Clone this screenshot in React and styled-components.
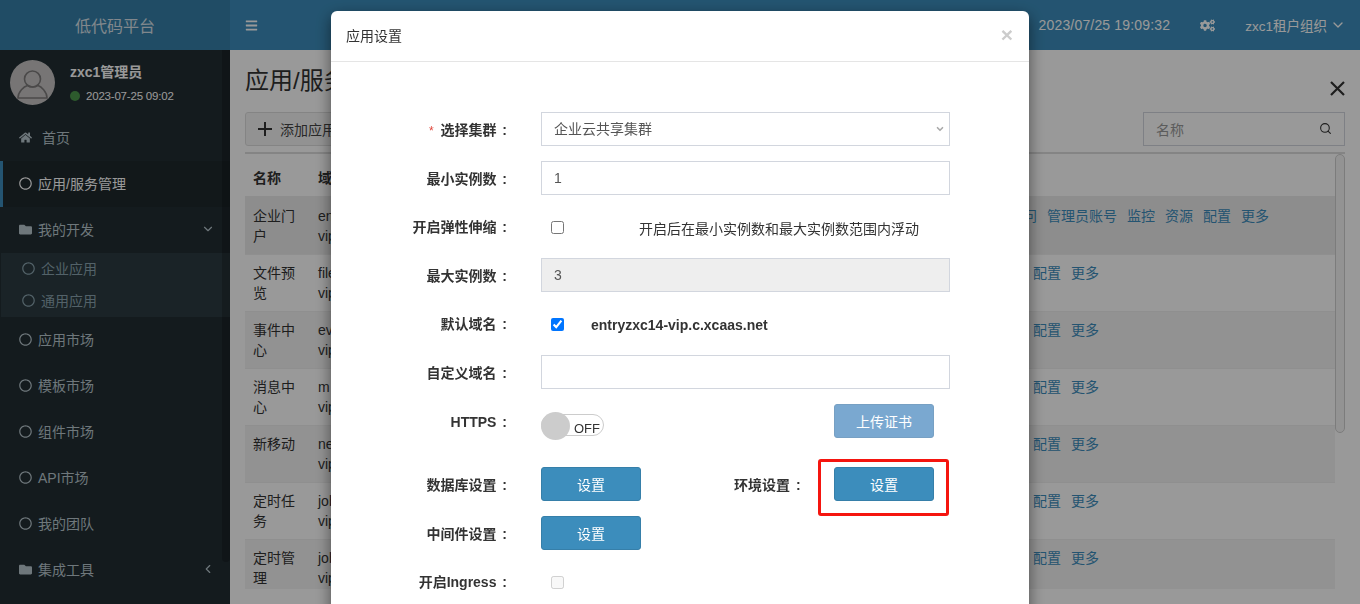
import React from "react";
import styled, { createGlobalStyle } from "styled-components";
import { FaBars, FaCogs, FaFolder, FaHome, FaRegCircle } from "react-icons/fa";
import { FiChevronDown, FiChevronLeft, FiSearch } from "react-icons/fi";

const GlobalStyle = createGlobalStyle`
  html, body {
    margin: 0;
    height: 100%;
    overflow: hidden;
    background: #fff;
    font-family: "Liberation Sans", "Noto Sans CJK SC", sans-serif;
    font-size: 14px;
    color: #333;
  }
  * { box-sizing: border-box; }
`;

const Page = styled.div`
  height: 100vh;
  display: flex;
  flex-direction: column;
  overflow: hidden;
`;
const Header = styled.header`
  height: 50px;
  flex: none;
  display: flex;
  align-items: center;
  background: #3c8dbc;
  color: #fff;
`;
const Logo = styled.div`
  width: 230px;
  height: 100%;
  background: #367fa9;
  display: flex;
  align-items: center;
  justify-content: center;
  font-size: 16px;
  color: #d8e2ea;
`;
const Burger = styled.span`
  margin-left: 15px;
  display: flex;
  font-size: 13px;
  color: #fff;
`;
const HeaderRight = styled.div`
  margin-left: auto;
  display: flex;
  align-items: center;
  padding-right: 14px;
`;
const Clock = styled.span`
  letter-spacing: 0.17px;
`;
const Cogs = styled.span`
  display: flex;
  margin-left: 30px;
  margin-right: 30px;
  font-size: 15px;
`;
const Tenant = styled.span`
  display: flex;
  align-items: center;
  gap: 3px;
  font-size: 13.5px;
  svg {
    font-size: 16px;
  }
`;
const Main = styled.div`
  flex: 1;
  min-height: 0;
  display: flex;
`;
const Sidebar = styled.aside`
  position: relative;
  width: 230px;
  flex: none;
  background: #222d32;
  overflow: hidden;
`;
const SlimBar = styled.div`
  position: absolute;
  top: 0;
  right: 0;
  width: 8px;
  height: 512px;
  border-radius: 0 0 7px 7px;
  background: rgba(0, 0, 0, 0.2);
`;
const UserPanel = styled.div`
  height: 65px;
  padding: 10px 0 0 10px;
  display: flex;
  gap: 15px;
`;
const Avatar = styled.svg`
  width: 45px;
  height: 45px;
  flex: none;
`;
const UserInfo = styled.div`
  color: #fff;
  display: flex;
  flex-direction: column;
`;
const UserName = styled.span`
  font-weight: 700;
  font-size: 14px;
  line-height: 20px;
  margin-top: 2px;
`;
const UserStatus = styled.span`
  display: flex;
  align-items: center;
  gap: 6px;
  font-size: 11.5px;
  letter-spacing: -0.2px;
  line-height: 16px;
  margin-top: 6px;
  color: #fff;
`;
const Dot = styled.i`
  width: 10px;
  height: 10px;
  border-radius: 50%;
  background: #4b964b;
`;
const MenuItem = styled.div`
  height: ${(p) => (p.$sub ? "32px" : "46px")};
  display: flex;
  align-items: center;
  gap: ${(p) => (p.$home ? "10px" : "6px")};
  padding-left: ${(p) => (p.$sub ? "21px" : p.$active ? "16px" : "19px")};
  padding-bottom: 2px;
  color: ${(p) => (p.$active ? "#fff" : p.$sub ? "#8aa4af" : "#b8c7ce")};
  background: ${(p) => (p.$active ? "#1e282c" : "transparent")};
  border-left: ${(p) => (p.$active ? "3px solid #3c8dbc" : "0")};
  font-size: 14px;
  svg {
    font-size: 13px;
    flex: none;
  }
`;
const Caret = styled.span`
  display: flex;
  margin-left: auto;
  margin-right: 15px;
  svg {
    font-size: 14px;
  }
`;
const SubMenu = styled.div`
  background: #2c3b41;
  margin-left: 1px;
`;
const Content = styled.main`
  flex: 1;
  min-width: 0;
  padding: 0 15px;
`;
const TitleRow = styled.div`
  height: 62px;
  display: flex;
  justify-content: space-between;
`;
const Title = styled.h1`
  margin: 14px 0 0;
  font-size: 24px;
  font-weight: 400;
  line-height: 34px;
`;
const CloseIcon = styled.svg`
  width: 15px;
  height: 15px;
  margin-top: 31px;
`;
const Toolbar = styled.div`
  height: 34px;
  display: flex;
  justify-content: space-between;
`;
const AddButton = styled.button`
  width: 200px;
  border: 1px solid #ddd;
  border-radius: 3px;
  background: #f4f4f4;
  color: #444;
  font: inherit;
  display: flex;
  align-items: center;
  gap: 8px;
  padding: 0 0 0 12px;
`;
const PlusIcon = styled.svg`
  width: 14px;
  height: 14px;
  flex: none;
`;
const Search = styled.div`
  width: 202px;
  border: 1px solid #d2d6de;
  display: flex;
  align-items: center;
  justify-content: space-between;
  padding: 0 12px;
  color: #999;
  svg {
    color: #333;
    font-size: 13px;
    margin-bottom: 2px;
  }
`;
const TableArea = styled.div`
  margin-top: 6px;
  height: 437px;
  border-top: 2px solid #ddd;
  display: flex;
  overflow: hidden;
`;
const Table = styled.div`
  flex: 1;
  min-width: 0;
`;
const HeadRow = styled.div`
  height: 42px;
  display: grid;
  grid-template-columns: 65px 1fr;
  font-weight: 700;
  line-height: 20px;
  padding-top: 14px;
`;
const Row = styled.div`
  display: grid;
  grid-template-columns: 65px 1fr 326px;
  padding: ${(p) => (p.$first ? "10px" : "8px")} 0 8px;
  line-height: 20px;
  background: ${(p) => (p.$first ? "#ebebeb" : p.$odd ? "#f4f4f4" : "#fff")};
  border-bottom: 1px solid #efefef;
`;
const Cell = styled.div`
  padding: 0 8px;
  white-space: pre-line;
  overflow: hidden;
`;
const Actions = styled.div`
  display: flex;
  gap: 10px;
  margin-left: ${(p) => (p.$short ? "24px" : "0")};
`;
const LinkText = styled.a`
  color: #3c8dbc;
`;
const ScrollTrack = styled.div`
  width: 10px;
  flex: none;
`;
const ScrollThumb = styled.div`
  height: 279px;
  background: #f6f6f6;
  border: 1px solid #cfcfcf;
  border-radius: 5px;
`;
const Overlay = styled.div`
  position: fixed;
  inset: 0;
  background: rgba(0, 0, 0, 0.4);
  display: flex;
  justify-content: center;
  align-items: flex-start;
  padding-top: 11px;
`;
const Modal = styled.div`
  width: 698px;
  height: 640px;
  flex: none;
  background: #fff;
  border-radius: 6px;
  box-shadow: 0 5px 15px rgba(0, 0, 0, 0.5);
`;
const ModalHeader = styled.div`
  height: 51px;
  border-bottom: 1px solid #e5e5e5;
  padding: 0 15px 2px;
  display: flex;
  align-items: center;
  justify-content: space-between;
  color: #333;
`;
const ModalClose = styled.span`
  font-size: 21px;
  font-weight: 700;
  color: #ccc;
  margin-right: 1px;
`;
const Form = styled.form`
  padding-top: 50px;
  display: flex;
  flex-direction: column;
  gap: 14.6px;
`;
const FormRow = styled.div`
  display: flex;
  height: 34px;
  margin-top: ${(p) => (p.$spaced ? "14.8px" : "0")};
`;
const Label = styled.label`
  width: 176px;
  height: 34px;
  flex: none;
  margin-right: 34px;
  text-align: right;
  font-weight: 700;
  line-height: 36px;
  word-spacing: 2px;
  white-space: nowrap;
  em {
    font-style: normal;
    font-weight: 400;
    color: #e0473c;
    font-size: 12px;
    margin-right: 1px;
  }
`;
const fieldCss = `
  width: 409px;
  height: 34px;
  border: 1px solid #d2d6de;
  padding: 6px 12px;
  font: inherit;
  color: #555;
  background: #fff;
  outline: none;
`;
const SelectWrap = styled.div`
  position: relative;
  height: 34px;
  svg {
    position: absolute;
    right: 5px;
    top: 12px;
    font-size: 10px;
    color: #aaa;
    stroke-width: 4;
    pointer-events: none;
  }
`;
const Select = styled.select`
  ${fieldCss}
  appearance: none;
`;
const Input = styled.input`
  ${fieldCss}
  &:read-only {
    background: ${(p) => (p.$locked ? "#eee" : "#fff")};
  }
`;
const CheckWrap = styled.div`
  display: flex;
  align-items: center;
  padding: 3px 0 0 10px;
`;
const Check = styled.input`
  margin: 0;
  width: 13px;
  height: 13px;
`;
const Hint = styled.span`
  margin-left: 75px;
  color: #333;
`;
const DomainText = styled.span`
  margin-left: 27px;
  font-weight: 700;
  font-size: 14px;
`;
const Split = styled.div`
  width: 409px;
  height: 34px;
  display: grid;
  grid-template-columns: 193px 100px 100px;
  align-items: start;
`;
const InlineLabel = styled.span`
  height: 34px;
  font-weight: 700;
  line-height: 36px;
  word-spacing: 2px;
`;
const Button = styled.button`
  width: 100px;
  height: 34px;
  border: 1px solid #367fa9;
  border-radius: 3px;
  background: #3c8dbc;
  color: #fff;
  font: inherit;
  padding: 0;
`;
const UploadButton = styled(Button)`
  grid-column: 3;
  background: #337ab7;
  border-color: #2e6da4;
  opacity: 0.65;
`;
const Marked = styled.div`
  position: relative;
  height: 34px;
`;
const RedBox = styled.div`
  position: absolute;
  top: -8px;
  left: -16px;
  width: 131px;
  height: 57px;
  border: 3px solid #f5150f;
  border-radius: 3px;
`;
const Toggle = styled.div`
  position: relative;
  width: 63px;
  height: 22px;
  margin-top: 10px;
  border: 1px solid #ccc;
  border-radius: 11px;
  text-align: right;
  padding-right: 3px;
  line-height: 27px;
  color: #333;
  font-size: 13px;
`;
const Knob = styled.i`
  position: absolute;
  left: -1px;
  top: -3px;
  width: 29px;
  height: 28px;
  border-radius: 50%;
  background: #ccc;
`;

const menu = [
  { name: "应用市场" },
  { name: "模板市场" },
  { name: "组件市场" },
  { name: "API市场" },
  { name: "我的团队" },
];

const rows = [
  { name: "企业门\n户", host: "entryzxc14-\nvip.c.xcaas.net", all: true },
  { name: "文件预\n览", host: "file-zxc14\nvip.c.xcaas.net" },
  { name: "事件中\n心", host: "event-zxc14\nvip.c.xcaas.net" },
  { name: "消息中\n心", host: "m  sg-zxc14\nvip.c.xcaas.net" },
  { name: "新移动", host: "new-zxc14\nvip.c.xcaas.net" },
  { name: "定时任\n务", host: "job-zxc14\nvip.c.xcaas.net" },
  { name: "定时管\n理", host: "job-admin\nvip.c.xcaas.net" },
];

const AvatarIcon = () => (
  <Avatar viewBox="0 0 45 45">
    <circle cx="22.5" cy="22.5" r="22.5" fill="#c6c4c4" />
    <g fill="none" stroke="#7d7b7b" strokeWidth="1.6">
      <circle cx="22.5" cy="19" r="8" />
      <path d="M8 38c0-6.5 6-11.5 9.500-12.500 3 2 8 2 10.500 0 3 1 9 6 9 12.500z" />
    </g>
  </Avatar>
);

export default function App() {
  return (
    <Page>
      <GlobalStyle />
      <Header>
        <Logo>低代码平台</Logo>
        <Burger>
          <FaBars />
        </Burger>
        <HeaderRight>
          <Clock>2023/07/25 19:09:32</Clock>
          <Cogs>
            <FaCogs />
          </Cogs>
          <Tenant>
            zxc1租户组织 <FiChevronDown />
          </Tenant>
        </HeaderRight>
      </Header>
      <Main>
        <Sidebar>
          <UserPanel>
            <AvatarIcon />
            <UserInfo>
              <UserName>zxc1管理员</UserName>
              <UserStatus>
                <Dot />
                2023-07-25 09:02
              </UserStatus>
            </UserInfo>
          </UserPanel>
          <MenuItem $home>
            <FaHome />
            首页
          </MenuItem>
          <MenuItem $active>
            <FaRegCircle />
            应用/服务管理
          </MenuItem>
          <MenuItem>
            <FaFolder />
            我的开发
            <Caret>
              <FiChevronDown />
            </Caret>
          </MenuItem>
          <SubMenu>
            <MenuItem $sub>
              <FaRegCircle />
              企业应用
            </MenuItem>
            <MenuItem $sub>
              <FaRegCircle />
              通用应用
            </MenuItem>
          </SubMenu>
          {menu.map((m) => (
            <MenuItem key={m.name}>
              <FaRegCircle />
              {m.name}
            </MenuItem>
          ))}
          <MenuItem>
            <FaFolder />
            集成工具
            <Caret>
              <FiChevronLeft />
            </Caret>
          </MenuItem>
          <SlimBar />
        </Sidebar>
        <Content>
          <TitleRow>
            <Title>应用/服务管理</Title>
            <CloseIcon viewBox="0 0 15 15">
              <path d="M1 1l13 13M14 1L1 14" stroke="#333" strokeWidth="2.2" fill="none" />
            </CloseIcon>
          </TitleRow>
          <Toolbar>
            <AddButton>
              <PlusIcon viewBox="0 0 14 14">
                <path d="M7 0v14M0 7h14" stroke="#333" strokeWidth="2" fill="none" />
              </PlusIcon>
              添加应用
            </AddButton>
            <Search>
              名称
              <FiSearch />
            </Search>
          </Toolbar>
          <TableArea>
            <Table>
              <HeadRow>
                <Cell>名称</Cell>
                <Cell>域名</Cell>
              </HeadRow>
              {rows.map((r, i) => (
                <Row key={r.name} $first={i === 0} $odd={i % 2 === 0}>
                  <Cell>{r.name}</Cell>
                  <Cell>{r.host}</Cell>
                  {r.all ? (
                    <Actions>
                      <LinkText>访问</LinkText>
                      <LinkText>管理员账号</LinkText>
                      <LinkText>监控</LinkText>
                      <LinkText>资源</LinkText>
                      <LinkText>配置</LinkText>
                      <LinkText>更多</LinkText>
                    </Actions>
                  ) : (
                    <Actions $short>
                      <LinkText>配置</LinkText>
                      <LinkText>更多</LinkText>
                    </Actions>
                  )}
                </Row>
              ))}
            </Table>
            <ScrollTrack>
              <ScrollThumb />
            </ScrollTrack>
          </TableArea>
        </Content>
      </Main>
      <Overlay>
        <Modal>
          <ModalHeader>
            应用设置
            <ModalClose>×</ModalClose>
          </ModalHeader>
          <Form>
            <FormRow>
              <Label>
                <em>*</em> 选择集群 :
              </Label>
              <SelectWrap>
                <Select defaultValue="share">
                  <option value="share">企业云共享集群</option>
                </Select>
                <FiChevronDown />
              </SelectWrap>
            </FormRow>
            <FormRow>
              <Label>最小实例数 :</Label>
              <Input defaultValue="1" />
            </FormRow>
            <FormRow>
              <Label>开启弹性伸缩 :</Label>
              <CheckWrap>
                <Check type="checkbox" />
                <Hint>开启后在最小实例数和最大实例数范围内浮动</Hint>
              </CheckWrap>
            </FormRow>
            <FormRow>
              <Label>最大实例数 :</Label>
              <Input $locked readOnly value="3" />
            </FormRow>
            <FormRow>
              <Label>默认域名 :</Label>
              <CheckWrap>
                <Check type="checkbox" defaultChecked />
                <DomainText>entryzxc14-vip.c.xcaas.net</DomainText>
              </CheckWrap>
            </FormRow>
            <FormRow>
              <Label>自定义域名 :</Label>
              <Input />
            </FormRow>
            <FormRow>
              <Label>HTTPS :</Label>
              <Split>
                <Toggle>
                  <Knob />
                  OFF
                </Toggle>
                <UploadButton type="button">上传证书</UploadButton>
              </Split>
            </FormRow>
            <FormRow $spaced>
              <Label>数据库设置 :</Label>
              <Split>
                <Button type="button">设置</Button>
                <InlineLabel>环境设置 :</InlineLabel>
                <Marked>
                  <Button type="button">设置</Button>
                  <RedBox />
                </Marked>
              </Split>
            </FormRow>
            <FormRow>
              <Label>中间件设置 :</Label>
              <Button type="button">设置</Button>
            </FormRow>
            <FormRow>
              <Label>开启Ingress :</Label>
              <CheckWrap>
                <Check type="checkbox" disabled />
              </CheckWrap>
            </FormRow>
          </Form>
        </Modal>
      </Overlay>
    </Page>
  );
}
